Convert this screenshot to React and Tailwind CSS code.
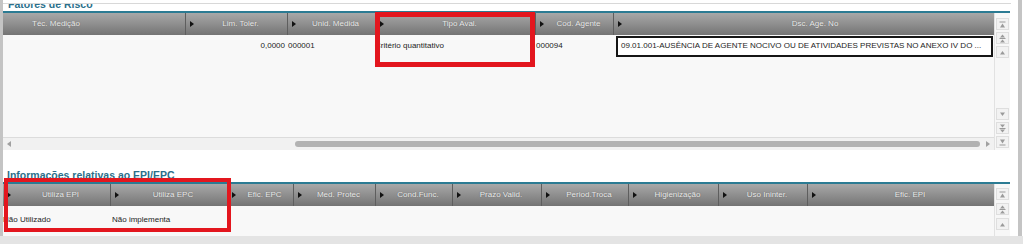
import React from "react";

const font = { fontFamily: '"Liberation Sans", Arial, sans-serif' };

const Arrow = () => (
  <svg width="4" height="6" viewBox="0 0 4 6" className="shrink-0">
    <path d="M0 0L4 3L0 6Z" fill="#111" />
  </svg>
);

const HeadCell = ({ className, label, arrow = true, first = false, textClass = "text-center" }) => (
  <div
    className={`flex h-full shrink-0 items-center pl-[4px] ${first ? "" : "border-l border-[#5e5e5e]"} ${className}`}
  >
    {arrow && <Arrow />}
    <span className={`flex-1 truncate text-[8px] text-[#ededed] [text-shadow:0_0_1px_#555] ${textClass}`}>
      {label}
    </span>
  </div>
);

const Glyph = ({ kind }) => {
  if (kind === "first")
    return (
      <svg width="7" height="7" viewBox="0 0 7 7">
        <rect x="0.5" y="0.5" width="6" height="1" fill="#9a9a9a" />
        <path d="M1 6.5L3.5 2.5L6 6.5Z" fill="#9a9a9a" />
      </svg>
    );
  if (kind === "page")
    return (
      <svg width="7" height="9" viewBox="0 0 7 9">
        <path d="M1 3.5L3.5 0.5L6 3.5Z" fill="#9a9a9a" />
        <rect x="0.5" y="4" width="6" height="1" fill="#9a9a9a" />
        <path d="M1 8.5L3.5 5.5L6 8.5Z" fill="#9a9a9a" />
      </svg>
    );
  return (
    <svg width="7" height="5" viewBox="0 0 7 5">
      <path d="M1 4.5L3.5 1L6 4.5Z" fill="#9a9a9a" />
    </svg>
  );
};

const ScrollBtn = ({ kind, down }) => (
  <div className="flex h-[12px] w-[13px] items-center justify-center border border-[#dedede] bg-[#f2f2f2]">
    <div className={down ? "rotate-180 flex" : "flex"}>
      <Glyph kind={kind} />
    </div>
  </div>
);

const TopGrid = () => (
  <div className="flex h-[137px]">
    <div className="flex w-[991px] flex-col">
      <div className="flex h-[22px] bg-[linear-gradient(to_bottom,#a8a8a8,#8c8c8c_55%,#747474)]">
        <HeadCell className="w-[182px]" label="Téc. Medição" arrow={false} first textClass="text-left pl-[25px]" />
        <HeadCell className="w-[102px]" label="Lim. Toler." />
        <HeadCell className="w-[88px]" label="Unid. Medida" />
        <HeadCell className="w-[160px]" label="Tipo Aval." />
        <HeadCell className="w-[78px]" label="Cod. Agente" />
        <HeadCell className="flex-1" label="Dsc. Age. No" textClass="text-center pl-[14px]" />
      </div>
      <div className="flex flex-1 flex-col bg-[#f8f8f8]">
        <div className="flex h-[22px] items-center text-[8px] text-[#1c1c1c]">
          <div className="w-[182px]" />
          <div className="w-[102px] pr-[2px] text-right">0,0000</div>
          <div className="w-[88px] pl-[1px]">000001</div>
          <div className="w-[160px]">Critério quantitativo</div>
          <div className="w-[78px] pl-[1px]">000094</div>
          <div className="ml-[3px] mr-[1px] flex h-[21px] flex-1 items-center border-2 border-[#151515] bg-white pl-[3px]">
            09.01.001-AUSÊNCIA DE AGENTE NOCIVO OU DE ATIVIDADES PREVISTAS NO ANEXO IV DO ...
          </div>
        </div>
      </div>
      <div className="flex h-[13px] items-center border-t border-[#dcdcdc] bg-[#f1f1f1] pl-[4px] pr-[4px]">
        <svg width="4" height="6" viewBox="0 0 4 6">
          <path d="M4 0L0 3L4 6Z" fill="#a0a0a0" />
        </svg>
        <div className="ml-[284px] h-[6px] flex-1 rounded-full bg-[#b2b2b2]" />
        <svg width="4" height="6" viewBox="0 0 4 6" className="ml-[6px]">
          <path d="M0 0L4 3L0 6Z" fill="#a0a0a0" />
        </svg>
      </div>
    </div>
    <div className="flex w-[16px] flex-col items-center justify-between border-l border-[#e2e2e2] bg-[#f7f7f7] pb-[2px] pt-[5px]">
      <div className="flex flex-col gap-[2px]">
        <ScrollBtn kind="first" />
        <ScrollBtn kind="page" />
        <ScrollBtn kind="one" />
      </div>
      <div className="flex flex-col gap-[2px]">
        <ScrollBtn kind="one" down />
        <ScrollBtn kind="page" down />
        <ScrollBtn kind="first" down />
      </div>
    </div>
  </div>
);

const BottomGrid = () => (
  <div className="flex h-[52px]">
    <div className="flex w-[991px] flex-col">
      <div className="flex h-[22px] bg-[linear-gradient(to_bottom,#a8a8a8,#8c8c8c_55%,#747474)]">
        <HeadCell className="w-[107px]" label="Utiliza EPI" first />
        <HeadCell className="w-[117px]" label="Utiliza EPC" />
        <HeadCell className="w-[66px]" label="Efic. EPC" />
        <HeadCell className="w-[82px]" label="Med. Protec" />
        <HeadCell className="w-[77px]" label="Cond.Func." />
        <HeadCell className="w-[89px]" label="Prazo Valid." />
        <HeadCell className="w-[87px]" label="Period.Troca" />
        <HeadCell className="w-[90px]" label="Higienização" />
        <HeadCell className="w-[89px]" label="Uso Ininter." />
        <HeadCell className="flex-1" label="Efic. EPI" textClass="text-center pl-[10px]" />
      </div>
      <div className="flex-1 bg-[#f8f8f8] pt-[2px]">
        <div className="flex h-[24px] items-center text-[8px] text-[#1c1c1c]">
          <div className="w-[107px]">Não Utilizado</div>
          <div className="w-[117px] pl-[2px]">Não implementa</div>
        </div>
      </div>
    </div>
    <div className="flex w-[16px] flex-col items-center gap-[3px] border-l border-[#e2e2e2] bg-[#f7f7f7] pt-[4px]">
      <ScrollBtn kind="first" />
      <ScrollBtn kind="page" />
      <ScrollBtn kind="one" />
    </div>
  </div>
);

export default function App() {
  return (
    <div className="relative h-[244px] w-[1023px] overflow-hidden bg-white" style={font}>
      <div className="flex h-[236px] w-[1022px] flex-col border-l-[3px] border-r-[4px] border-[#c4c4c4]">
        <div className="h-[3px]" />
        <div className="h-px w-[1008px] bg-[#d8d8d8]" />
        <div className="flex h-[5px] items-start overflow-hidden pl-[5px]">
          <span className="-mt-[5px] text-[10.5px] font-bold leading-none text-[#2a6f8b]">Fatores de Risco</span>
        </div>
        <div className="h-[2px]" />
        <div className="h-[2px] w-[1007px] bg-[#2b7b93]" />
        <TopGrid />
        <div className="flex h-[32px] items-end pb-[2px] pl-[4px]">
          <span className="text-[10.5px] font-bold leading-none text-[#2a6f8b]">
            Informações relativas ao EPI/EPC
          </span>
        </div>
        <div className="h-[2px] w-[1007px] bg-[#2b7b93]" />
        <BottomGrid />
      </div>
      <div className="h-[8px] bg-[#e4e4e4]" />

      <div className="absolute left-[375px] top-[12px] h-[55px] w-[160px] border-[5px] border-[#e3161e]" />
      <div className="absolute left-[4px] top-[178px] h-[54px] w-[227px] border-[4px] border-[#e3161e]" />
    </div>
  );
}
